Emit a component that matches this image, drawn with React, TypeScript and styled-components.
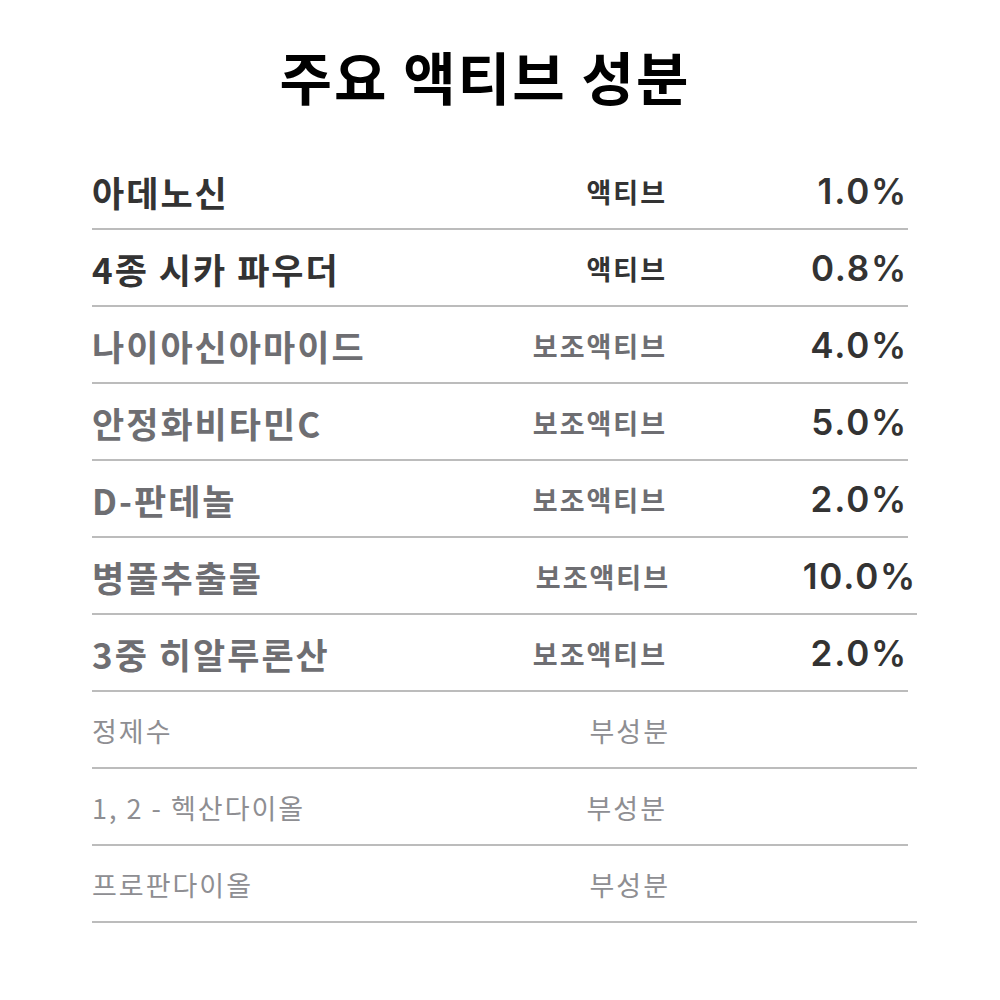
import React from "react";
import styled, { createGlobalStyle } from "styled-components";

const Global = createGlobalStyle`
  html, body { margin: 0; padding: 0; background: #ffffff; }
  body { font-family: "Noto Sans CJK KR", "Noto Sans", sans-serif; }
`;

const Page = styled.div`
  width: 1000px;
  height: 1000px;
  background: #ffffff;
  display: flex;
  flex-direction: column;
`;

const Title = styled.h1`
  margin: 0;
  width: 970px;
  height: 153px;
  display: flex;
  align-items: center;
  justify-content: center;
  padding-bottom: 4px;
  box-sizing: border-box;
  font-size: 57px;
  font-weight: 700;
  color: #000000;
  letter-spacing: 2px;
`;

const List = styled.div`
  display: flex;
  flex-direction: column;
  padding-left: 92px;
`;

type Tone = "strong" | "mid" | "light";

const Row = styled.div<{ $width: number; $pct: number }>`
  width: ${(p) => p.$width}px;
  height: 77px;
  box-sizing: border-box;
  border-bottom: 2px solid #bcbcbc;
  display: grid;
  grid-template-columns: 1fr auto ${(p) => p.$pct}px;
  align-items: center;
  padding-top: 1px;
`;

const nameColor = { strong: "#333333", mid: "#6e6e72", light: "#8e8e92" };

const Name = styled.div<{ $tone: Tone }>`
  font-size: ${(p) => (p.$tone === "light" ? "27px" : "35px")};
  font-weight: ${(p) => (p.$tone === "light" ? 400 : 700)};
  color: ${(p) => nameColor[p.$tone]};
  letter-spacing: 2px;
  white-space: nowrap;
`;

const Kind = styled.div<{ $tone: Tone }>`
  font-size: 27px;
  font-weight: ${(p) => (p.$tone === "light" ? 400 : 700)};
  color: ${(p) => nameColor[p.$tone]};
  letter-spacing: 2px;
  margin-right: -2px;
  text-align: right;
  white-space: nowrap;
`;

const Pct = styled.div`
  font-family: "Inter", "Noto Sans", sans-serif;
  font-size: 35px;
  font-weight: 600;
  color: #333333;
  text-align: right;
  letter-spacing: 1.8px;
`;

type Item = { name: string; kind: string; pct?: string; tone: Tone; wide?: boolean };

const items: Item[] = [
  { name: "아데노신", kind: "액티브", pct: "1.0%", tone: "strong" },
  { name: "4종 시카 파우더", kind: "액티브", pct: "0.8%", tone: "strong" },
  { name: "나이아신아마이드", kind: "보조액티브", pct: "4.0%", tone: "mid" },
  { name: "안정화비타민C", kind: "보조액티브", pct: "5.0%", tone: "mid" },
  { name: "D-판테놀", kind: "보조액티브", pct: "2.0%", tone: "mid" },
  { name: "병풀추출물", kind: "보조액티브", pct: "10.0%", tone: "mid", wide: true },
  { name: "3중 히알루론산", kind: "보조액티브", pct: "2.0%", tone: "mid" },
  { name: "정제수", kind: "부성분", tone: "light", wide: true },
  { name: "1, 2 - 헥산다이올", kind: "부성분", tone: "light" },
  { name: "프로판다이올", kind: "부성분", tone: "light", wide: true },
];

export default function App() {
  return (
    <Page>
      <Global />
      <Title>주요 액티브 성분</Title>
      <List>
        {items.map((it) => (
          <Row key={it.name} $width={it.wide ? 825 : 816} $pct={it.wide ? 249 : 243}>
            <Name $tone={it.tone}>{it.name}</Name>
            <Kind $tone={it.tone}>{it.kind}</Kind>
            <Pct>{it.pct ?? ""}</Pct>
          </Row>
        ))}
      </List>
    </Page>
  );
}
